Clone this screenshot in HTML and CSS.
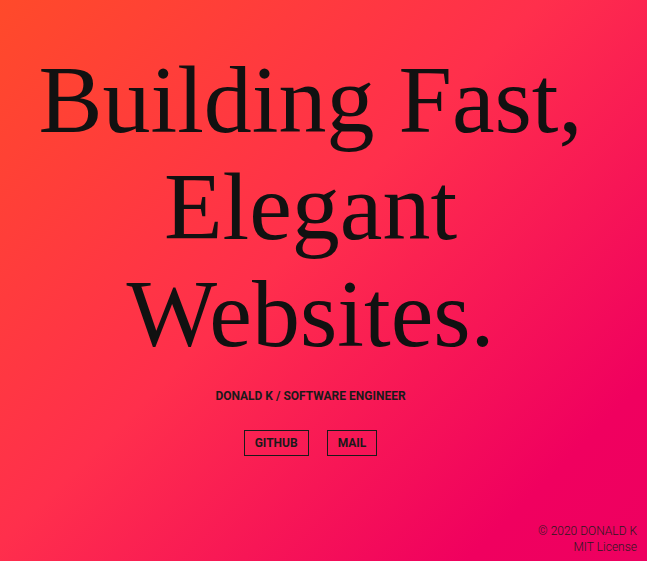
FILE: index.html
```html
<!DOCTYPE html>
<html lang="en">
<head>
<meta charset="utf-8">
<title>Donald K</title>
<link rel="stylesheet" href="styles.css">
</head>
<body>
<div class="page">
  <main class="hero">
    <h1 class="title">Building Fast,<br>Elegant<br>Websites.</h1>
    <p class="subtitle">DONALD K / SOFTWARE ENGINEER</p>
    <nav class="links">
      <a class="btn" href="#">GITHUB</a>
      <a class="btn" href="#">MAIL</a>
    </nav>
  </main>
  <footer class="footer">
    <span>© 2020 DONALD K</span>
    <span>MIT License</span>
  </footer>
</div>
</body>
</html>
```

FILE: styles.css
```css
html, body {
  margin: 0;
  padding: 0;
  height: 100%;
}
body {
  background: linear-gradient(135deg, #ff4a2a 0%, #ff2f4c 45%, #f0005f 85%, #ee0060 100%);
  color: #111;
  font-family: Roboto, "Liberation Sans", sans-serif;
}
.page {
  min-height: 100vh;
  display: flex;
  flex-direction: column;
  box-sizing: border-box;
}
.hero {
  display: flex;
  flex-direction: column;
  align-items: center;
  padding: 46px 26px 0 0;
}
.title {
  margin: 0;
  font-family: "Liberation Serif", serif;
  font-weight: 400;
  font-size: 96px;
  line-height: 107px;
  text-align: center;
  color: #111;
}
.subtitle {
  margin: 22px 0 0;
  font-size: 12px;
  font-weight: 700;
  line-height: 14px;
  color: #1a1a1a;
}
.links {
  display: flex;
  gap: 18px;
  margin-top: 27px;
}
.btn {
  display: block;
  box-sizing: border-box;
  height: 26px;
  padding: 0 10px;
  border: 1px solid #1a1a1a;
  font-size: 12px;
  font-weight: 700;
  line-height: 24px;
  color: #1a1a1a;
  text-decoration: none;
}
.footer {
  margin-top: auto;
  display: flex;
  flex-direction: column;
  align-items: flex-end;
  padding: 0 10px 6px 0;
  font-size: 12px;
  font-weight: 300;
  line-height: 16px;
  color: #2a1a20;
}
```
